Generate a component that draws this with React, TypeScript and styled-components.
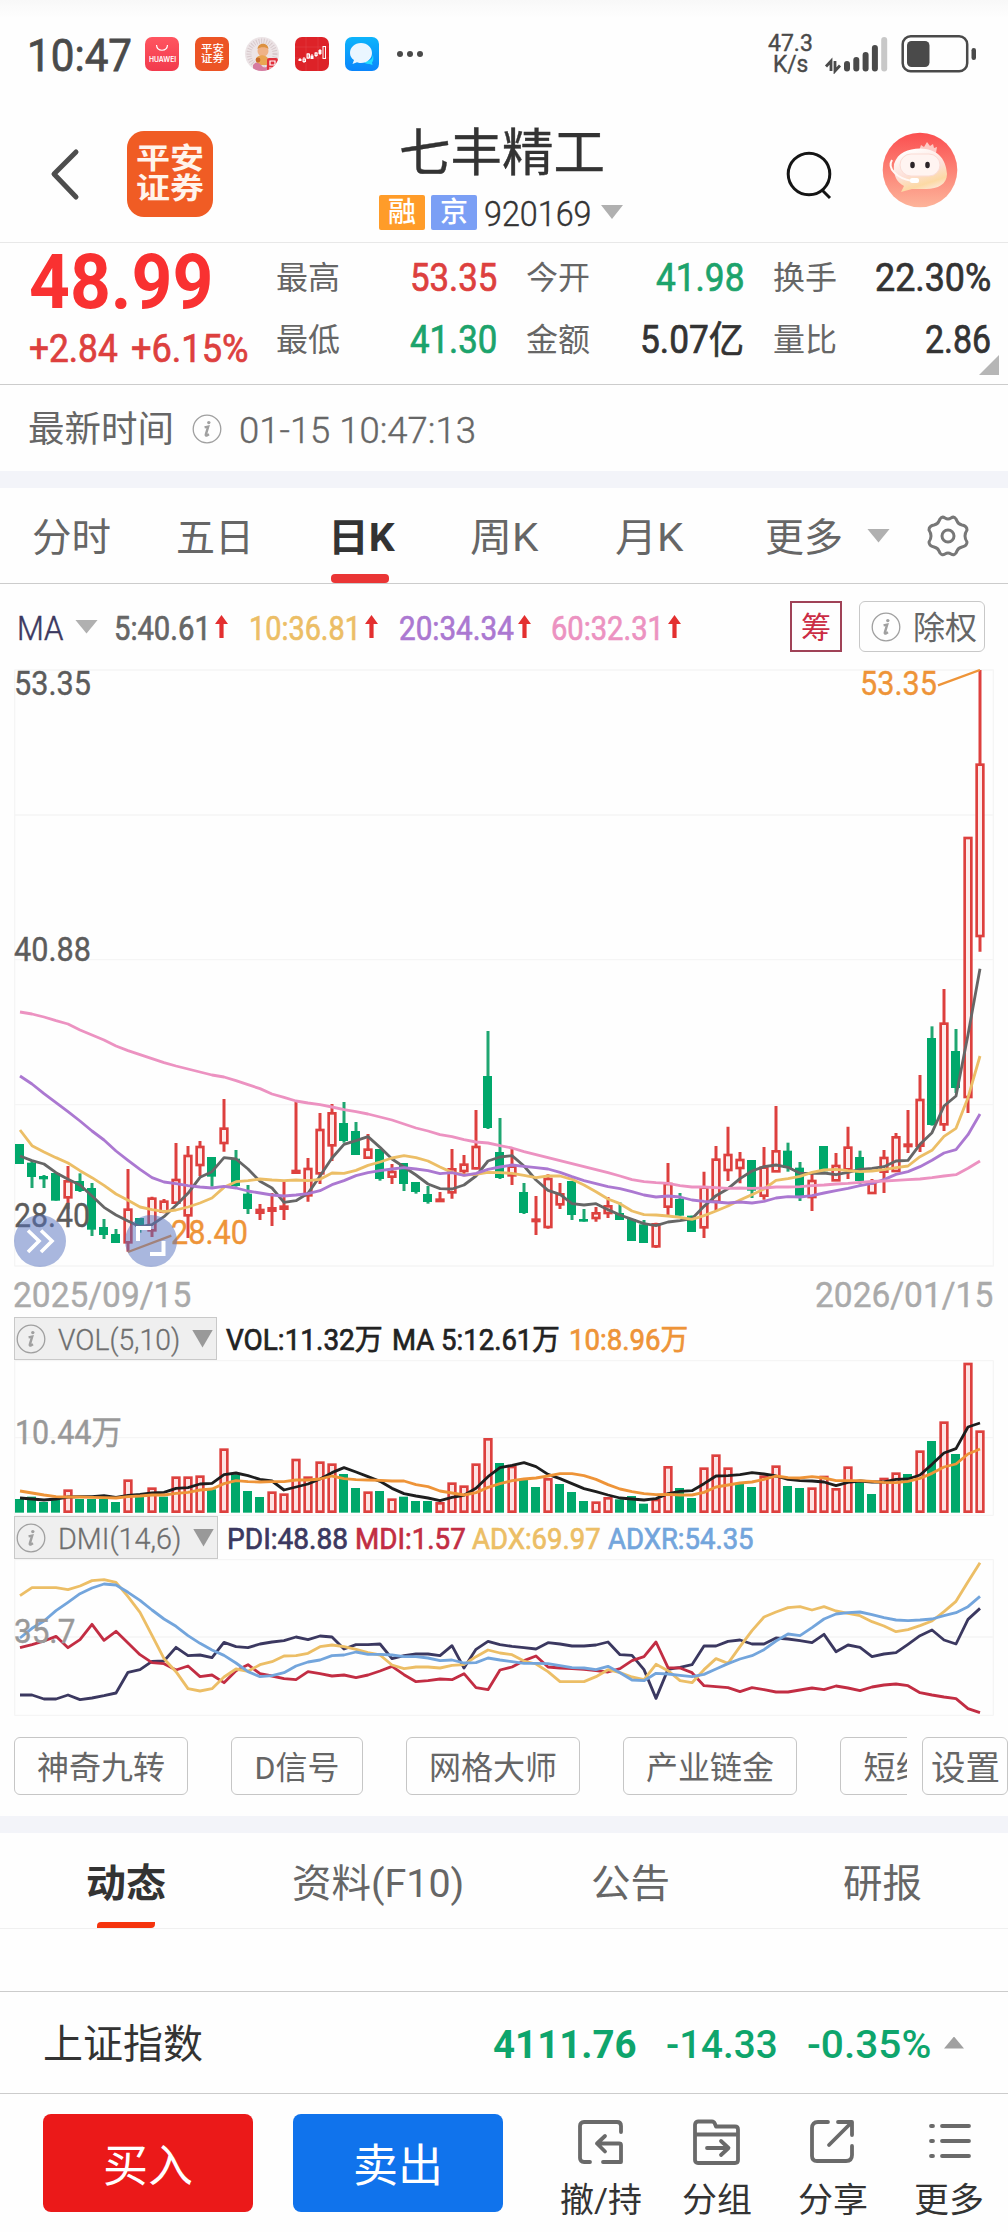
import React, { useLayoutEffect, useRef, useState } from 'react';
import styled, { createGlobalStyle, css } from 'styled-components';

const C = {
  red: '#dd403e',
  green: '#00a86b',
  text: '#333333',
  grey: '#666666',
  line: '#cccccc',
  orange: '#ee9438',
  yellow: '#ecbe66',
  purple: '#ab78d1',
  pink: '#ec92c1',
  navy: '#3b3860',
  crimson: '#c22d43',
  blue: '#73a5dc',
};

const GlobalStyle = createGlobalStyle`
  * { box-sizing: border-box; }
  body {
    margin: 0;
    background: #fefefe;
    color: ${C.text};
    font-family: Roboto, "Noto Sans CJK SC", sans-serif;
  }
  svg { display: block; }
`;

// ---------- text that is condensed or widened to a set width ----------

const FitBox = styled.span<{ $w: number }>`
  display: inline-block;
  flex: none;
  width: ${(p) => p.$w}px;
  line-height: 1;
  white-space: nowrap;
`;

const FitInner = styled.span`
  display: inline-block;
  transform-origin: left center;
`;

interface FitProps {
  w: number;
  className?: string;
  children: React.ReactNode;
}

function Fit({ w, className, children }: FitProps) {
  const ref = useRef<HTMLSpanElement>(null);
  const [scale, setScale] = useState(1);

  useLayoutEffect(() => {
    if (ref.current && ref.current.offsetWidth) {
      setScale(w / ref.current.offsetWidth);
    }
  }, [w]);

  return (
    <FitBox $w={w} className={className}>
      <FitInner ref={ref} style={{ transform: `scaleX(${scale})` }}>
        {children}
      </FitInner>
    </FitBox>
  );
}

// ---------- chart data, in thirds of a pixel ----------

// [up, high, top, bottom, low]
const candles: [number, number, number, number, number][] = [
  [0, 492, 492, 552, 552], [0, 540, 548, 591, 624], [0, 585, 588, 598, 624],
  [0, 579, 579, 662, 662], [1, 558, 604, 652, 688], [0, 580, 603, 633, 636],
  [0, 609, 624, 749, 768], [0, 717, 741, 765, 777], [0, 747, 762, 789, 789],
  [1, 567, 689, 787, 815], [0, 714, 714, 740, 758], [1, 650, 656, 751, 771],
  [1, 657, 665, 695, 700], [1, 489, 600, 668, 672], [1, 498, 528, 706, 774],
  [1, 483, 501, 555, 588], [0, 531, 531, 590, 620], [1, 357, 446, 489, 515],
  [0, 510, 536, 618, 620], [0, 615, 641, 687, 702], [1, 672, 690, 698, 720],
  [1, 639, 685, 692, 738], [1, 605, 680, 686, 720], [1, 366, 573, 578, 580],
  [1, 534, 567, 646, 665], [1, 399, 450, 580, 612], [1, 372, 400, 496, 543],
  [0, 366, 429, 483, 488], [0, 426, 453, 525, 525], [1, 462, 509, 533, 537],
  [0, 507, 507, 597, 602], [1, 552, 576, 590, 612], [0, 549, 549, 612, 633],
  [0, 606, 606, 636, 641], [0, 618, 642, 666, 671], [1, 636, 659, 663, 666],
  [1, 507, 568, 637, 656], [1, 525, 554, 573, 582], [1, 390, 501, 565, 568],
  [0, 153, 288, 444, 447], [0, 414, 516, 594, 597], [1, 505, 560, 586, 615],
  [0, 609, 636, 699, 702], [1, 648, 719, 723, 765], [1, 583, 597, 741, 746],
  [1, 609, 643, 673, 687], [0, 603, 603, 705, 720], [0, 687, 717, 725, 725],
  [1, 681, 700, 714, 725], [1, 651, 679, 699, 714], [0, 667, 699, 720, 720],
  [0, 717, 717, 783, 783], [0, 720, 733, 789, 789], [1, 728, 733, 799, 804],
  [1, 549, 612, 680, 705], [0, 639, 657, 707, 707], [0, 707, 707, 756, 756],
  [1, 575, 623, 742, 774], [1, 498, 539, 665, 692], [1, 440, 525, 570, 603],
  [1, 516, 540, 564, 610], [0, 540, 540, 632, 654], [1, 501, 563, 647, 659],
  [1, 378, 514, 574, 574], [0, 488, 512, 564, 575], [0, 546, 563, 652, 663],
  [1, 580, 603, 651, 693], [0, 498, 498, 574, 574], [1, 519, 558, 601, 603],
  [1, 440, 503, 568, 597], [0, 512, 531, 603, 613], [1, 597, 610, 639, 639],
  [1, 510, 534, 575, 639], [1, 459, 472, 573, 573], [1, 390, 494, 498, 519],
  [1, 285, 360, 497, 516], [0, 139, 174, 435, 437], [1, 27, 131, 433, 453],
  [0, 147, 213, 324, 339], [1, -426, -426, 351, 399], [1, -930, -646, -132, -85],
];

const ma5 = [
  528, 542, 552, 578, 598, 615, 648, 682, 705, 723, 740, 734, 710, 676, 640, 592, 575, 533, 537, 567,
  604, 624, 667, 662, 640, 588, 534, 493, 482, 470, 502, 537, 561, 585, 612, 626, 627, 615, 588, 543,
  531, 527, 558, 600, 631, 643, 671, 675, 671, 689, 705, 718, 731, 737, 726, 722, 716, 679, 647, 626,
  596, 573, 560, 555, 562, 580, 580, 579, 584, 577, 568, 565, 560, 543, 541, 493, 458, 378, 348, 164, -34,
];
const ma10 = [
  450, 497, 516, 533, 549, 572, 593, 616, 642, 661, 681, 689, 695, 690, 681, 669, 654, 622, 605, 602,
  597, 600, 602, 600, 602, 598, 579, 580, 571, 556, 546, 534, 527, 533, 543, 561, 577, 585, 583, 577,
  578, 580, 586, 593, 588, 588, 598, 615, 635, 657, 671, 693, 704, 705, 708, 712, 718, 707, 693, 678,
  660, 644, 627, 601, 596, 589, 577, 570, 568, 572, 575, 573, 569, 563, 558, 530, 511, 469, 445, 353, 228,
];
const ma20 = [
  288, 312, 341, 368, 395, 423, 453, 480, 513, 541, 568, 593, 606, 611, 617, 621, 624, 619, 624, 633,
  639, 645, 648, 645, 641, 632, 614, 602, 587, 578, 572, 567, 563, 567, 572, 581, 578, 586, 580, 568,
  561, 555, 559, 563, 567, 577, 590, 602, 611, 620, 626, 635, 645, 651, 648, 651, 660, 664, 666, 669,
  666, 669, 664, 654, 650, 651, 647, 639, 632, 625, 617, 610, 599, 583, 575, 560, 541, 519, 509, 464, 402,
];
const ma60 = [
  96, 102, 111, 122, 132, 150, 165, 180, 198, 212, 224, 236, 248, 258, 267, 276, 285, 291, 302, 314,
  326, 342, 352, 363, 369, 374, 381, 389, 395, 402, 411, 420, 432, 444, 453, 464, 470, 479, 486, 489,
  497, 504, 515, 524, 533, 542, 551, 560, 569, 578, 588, 599, 605, 608, 610, 617, 621, 621, 623, 625,
  624, 625, 624, 621, 621, 620, 617, 615, 612, 610, 607, 604, 603, 601, 599, 597, 593, 588, 584, 565, 543,
];

// tops of the volume bars, negative on a falling day
const volumes = [
  -597, -590, -606, -597, 570, -597, -597, -597, -606, 540, -590, 564, -590, 531, 531, 528, -568, 447,
  -523, -573, -591, 576, 582, 478, 531, 486, 492, -522, -564, 576, -573, 597, -590, -603, -603, 608,
  549, 558, 492, 416, -489, 499, -538, -561, 536, -552, -576, -603, 606, 593, -598, -588, -611, 598,
  500, -564, -594, 504, 465, 504, -550, -561, 528, 498, -558, -564, 564, 529, 566, 501, -547, -582,
  535, 519, -522, 453, -423, 366, -462, 190, 393,
];
const vol5 = [
  594, 597, 600, 597, 591, 590, 590, 587, 592, 586, 583, 579, 577, 565, 563, 552, 550, 524, 519, 527,
  538, 543, 570, 561, 552, 537, 518, 503, 516, 530, 544, 565, 581, 588, 594, 602, 592, 586, 565, 530,
  503, 496, 488, 500, 523, 536, 551, 566, 575, 585, 594, 597, 600, 596, 581, 574, 572, 551, 528, 527,
  524, 518, 522, 528, 538, 542, 543, 546, 557, 547, 543, 546, 546, 538, 537, 525, 493, 459, 446, 381, 369,
];
const vol10 = [
  573, 579, 585, 590, 591, 591, 592, 593, 594, 590, 588, 585, 585, 580, 577, 570, 567, 551, 542, 545,
  546, 545, 545, 540, 540, 537, 528, 536, 539, 540, 541, 543, 543, 554, 560, 573, 579, 585, 578, 562,
  551, 542, 537, 534, 528, 521, 521, 527, 538, 554, 567, 575, 581, 584, 583, 585, 585, 577, 561, 555,
  549, 546, 538, 528, 533, 534, 530, 534, 542, 542, 542, 544, 547, 548, 544, 535, 520, 501, 492, 462, 447,
];

const pdi = [
  1185, 1185, 1197, 1197, 1185, 1199, 1194, 1187, 1179, 1117, 1109, 1084, 1083, 1042, 1067, 1065, 1073,
  1027, 1040, 1043, 1032, 1026, 1022, 1011, 1019, 1008, 1011, 1047, 1034, 1034, 1032, 1076, 1067, 1062,
  1062, 1067, 1037, 1104, 1048, 1024, 1034, 1039, 1043, 1047, 1028, 1032, 1038, 1038, 1035, 1026, 1064,
  1066, 1109, 1195, 1108, 1102, 1094, 1038, 1038, 1024, 1020, 1032, 1032, 1014, 1017, 1022, 1028, 1003,
  1055, 1035, 1042, 1070, 1062, 1058, 1033, 1007, 990, 1020, 1032, 958, 925,
];
const mdi = [
  1043, 1034, 1023, 1009, 1043, 1019, 973, 1021, 994, 1029, 1064, 1088, 1091, 1110, 1098, 1130, 1125,
  1148, 1112, 1094, 1121, 1128, 1136, 1139, 1115, 1121, 1128, 1125, 1133, 1125, 1113, 1099, 1124, 1145,
  1142, 1137, 1139, 1121, 1163, 1169, 1110, 1101, 1082, 1068, 1101, 1104, 1106, 1108, 1112, 1116, 1106,
  1082, 1070, 1026, 1103, 1104, 1118, 1157, 1160, 1163, 1175, 1163, 1169, 1176, 1176, 1170, 1164, 1169,
  1158, 1164, 1172, 1161, 1155, 1152, 1157, 1178, 1185, 1191, 1196, 1226, 1238,
];
const adx = [
  887, 863, 863, 863, 869, 858, 842, 839, 847, 890, 937, 1006, 1076, 1115, 1166, 1173, 1166, 1131, 1107,
  1114, 1094, 1085, 1068, 1067, 1060, 1040, 1035, 1040, 1048, 1058, 1065, 1095, 1106, 1101, 1101, 1104,
  1096, 1094, 1070, 1050, 1059, 1064, 1083, 1092, 1115, 1145, 1145, 1145, 1130, 1109, 1118, 1131, 1139,
  1093, 1112, 1142, 1148, 1109, 1076, 1090, 1040, 992, 951, 936, 923, 920, 930, 920, 933, 940, 947, 965,
  978, 995, 989, 977, 963, 935, 904, 845, 788,
];
const adxr = [
  1014, 985, 963, 932, 907, 881, 864, 852, 855, 877, 901, 930, 957, 979, 1007, 1030, 1050, 1066, 1089,
  1115, 1130, 1127, 1118, 1098, 1086, 1080, 1067, 1065, 1056, 1063, 1063, 1065, 1070, 1070, 1074, 1082,
  1080, 1089, 1088, 1074, 1080, 1085, 1090, 1090, 1091, 1097, 1103, 1104, 1109, 1099, 1118, 1140, 1142,
  1120, 1122, 1126, 1130, 1123, 1107, 1091, 1077, 1067, 1049, 1023, 1002, 1007, 983, 957, 942, 938, 936,
  944, 953, 960, 962, 960, 957, 947, 938, 920, 889,
];

const xAt = (i: number) => 60 + 36 * i;

const Series = ({ data, color }: { data: number[]; color: string }) => (
  <polyline
    points={data.map((y, i) => `${xAt(i)},${y}`).join(' ')}
    fill="none"
    stroke={color}
    strokeWidth={8.5}
    strokeLinejoin="round"
  />
);

const Grid = ({ rows }: { rows: number[] }) => (
  <g stroke="#f5f5f5" strokeWidth={4}>
    {rows.map((y) => (
      <line key={y} x1={43} x2={2981} y1={y} y2={y} />
    ))}
    <line x1={44} x2={44} y1={rows[0]} y2={rows[rows.length - 1]} />
    <line x1={2980} x2={2980} y1={rows[0]} y2={rows[rows.length - 1]} />
  </g>
);

// ---------- shared bits ----------

const Page = styled.div`
  width: 1008px;
  height: 2232px;
  display: flex;
  flex-direction: column;
  overflow: hidden;
  background: #fefefe;
`;

const Triangle = styled.i<{ $w?: number; $h?: number; $up?: boolean; $ml?: number; $c?: string }>`
  flex: none;
  width: ${(p) => p.$w ?? 23}px;
  height: ${(p) => p.$h ?? 14}px;
  margin-left: ${(p) => p.$ml ?? 0}px;
  background: ${(p) => p.$c ?? '#b0b0b0'};
  clip-path: ${(p) => (p.$up ? 'polygon(50% 0, 100% 100%, 0 100%)' : 'polygon(0 0, 100% 0, 50% 100%)')};
`;

const InfoSvg = styled.svg`
  flex: none;
`;

const InfoIcon = ({ color = '#a0a0a0' }: { color?: string }) => (
  <InfoSvg width="30" height="30" viewBox="0 0 30 30" fill="none" stroke={color}>
    <circle cx="15" cy="15" r="13.8" strokeWidth="1.3" />
    <circle cx="16.8" cy="8.6" r="1.7" fill={color} stroke="none" />
    <path d="M12.6 13.4 L16.2 12.6 L13.8 20.6 Q13.6 22 15 21.4 L17 20.2" strokeWidth="2.4" />
  </InfoSvg>
);

const Band = styled.div`
  flex: none;
  height: 17px;
  background: #f3f4f9;
`;

// ---------- status bar ----------

const StatusBar = styled.div`
  flex: none;
  height: 108px;
  display: flex;
  align-items: center;
  padding: 0 32px 0 27px;
  background: linear-gradient(#f8f8f8, #fefefe 18px);
`;

const Clock = styled(Fit)`
  font-size: 45px;
  font-weight: 400;
  color: #4a4a4a;
  -webkit-text-stroke: 0.8px #4a4a4a;
  padding-top: 2px;
`;

const AppIcons = styled.div`
  display: flex;
  gap: 16px;
  margin-left: 13px;
`;

const MiniIcon = styled.div<{ $bg: string; $round?: boolean }>`
  width: 34px;
  height: 34px;
  border-radius: ${(p) => (p.$round ? '50%' : '7px')};
  background: ${(p) => p.$bg};
  display: flex;
  flex-direction: column;
  align-items: center;
  justify-content: center;
  color: white;
  overflow: hidden;
`;

const HuaweiText = styled(Fit)`
  font-size: 7px;
  font-weight: 600;
  font-family: Inter, sans-serif;
  margin-top: 2px;
`;

const MiniLogoText = styled(Fit)`
  font-size: 10px;
  font-weight: 500;
  line-height: 10px;
`;

const More = styled.div`
  display: flex;
  gap: 4px;
  margin: 0 auto 0 18px;
  i {
    width: 6px;
    height: 6px;
    border-radius: 50%;
    background: #4a4a4a;
  }
`;

const Speed = styled.div`
  display: flex;
  flex-direction: column;
  align-items: center;
  font-size: 24px;
  font-weight: 400;
  color: #4a4a4a;
  -webkit-text-stroke: 0.4px #4a4a4a;
  span { line-height: 21px; }
`;

const StatusIcons = styled.svg`
  margin-left: 11px;
`;

// ---------- title bar ----------

const TitleBar = styled.header`
  flex: none;
  height: 135px;
  display: flex;
  align-items: flex-start;
  border-bottom: 1px solid #e8e8e8;
`;

const Brand = styled.div`
  width: 86px;
  height: 86px;
  margin: 23px 0 0 47px;
  border-radius: 17px;
  background: #f05c24;
  color: #fff4ec;
  display: flex;
  flex-direction: column;
  align-items: center;
  justify-content: center;
`;

const BrandText = styled(Fit)`
  font-size: 29px;
  font-weight: 700;
  line-height: 30px;
`;

const BackIcon = styled.svg`
  margin: 38px 0 0 48px;
`;

const TitleCol = styled.div`
  width: 244px;
  margin: 20px 0 0 166px;
  display: flex;
  flex-direction: column;
  align-items: center;
`;

const Title = styled(Fit)`
  font-size: 51px;
  line-height: 52px;
  margin-left: 1px;
  -webkit-text-stroke: 0.4px ${C.text};
`;

const SubRow = styled.div`
  display: flex;
  align-items: center;
  margin-top: 12px;
`;

const Tag = styled.span<{ $bg: string }>`
  width: 46px;
  height: 35px;
  margin-right: 6px;
  border-radius: 2px;
  background: ${(p) => p.$bg};
  color: white;
  font-size: 28px;
  font-weight: 500;
  line-height: 35px;
  text-align: center;
`;

const Code = styled(Fit)`
  font-size: 35px;
  font-weight: 300;
  margin-left: 1px;
  padding-top: 5px;
  -webkit-text-stroke: 0.4px ${C.text};
`;

const SearchSvg = styled.svg`
  margin: 42px 0 0 163px;
`;

const AvatarSvg = styled.svg`
  margin: 24px 0 0 48px;
`;

// ---------- quote ----------

const Quote = styled.section`
  flex: none;
  height: 142px;
  display: flex;
  border-bottom: 1px solid ${C.line};
  position: relative;
`;

const PriceCol = styled.div`
  width: 276px;
  padding: 0 0 0 29px;
  display: flex;
  flex-direction: column;
`;

const Price = styled(Fit)`
  font-size: 76px;
  font-weight: 700;
  color: #f93131;
  margin-top: 1px;
`;

const Changes = styled.div`
  display: flex;
  gap: 13px;
  margin-top: 10px;
`;

const Num = styled(Fit)<{ $c?: string }>`
  font-size: 38px;
  font-weight: 400;
  color: ${(p) => p.$c ?? C.text};
  -webkit-text-stroke: 0.7px ${(p) => p.$c ?? C.text};
`;

const Stats = styled.div`
  display: grid;
  grid-template-columns: 221px 218px 218px;
  column-gap: 29px;
  grid-template-rows: 62px 62px;
  padding-top: 4px;
`;

const Stat = styled.div`
  display: flex;
  align-items: center;
  justify-content: space-between;
  & > ${FitBox}:first-child { font-size: 32px; color: ${C.grey}; }
`;

const Corner = styled.i`
  position: absolute;
  right: 9px;
  bottom: 9px;
  width: 20px;
  height: 20px;
  background: #b6b6b6;
  clip-path: polygon(100% 0, 100% 100%, 0 100%);
`;

const stats = [
  { label: '最高', value: '53.35', w: 87, color: C.red },
  { label: '今开', value: '41.98', w: 88, color: '#1ca36c' },
  { label: '换手', value: '22.30%', w: 116 },
  { label: '最低', value: '41.30', w: 87, color: '#1ca36c' },
  { label: '金额', value: '5.07亿', w: 104 },
  { label: '量比', value: '2.86', w: 66 },
];

const TimeRow = styled.div`
  flex: none;
  height: 86px;
  display: flex;
  align-items: center;
  padding: 2px 0 0 28px;
  font-size: 36px;
  color: ${C.grey};
  ${InfoSvg} { margin: 0 17px 0 18px; }
`;

const TimeLabel = styled(Fit)`
  padding-top: 2px;
`;

const TimeValue = styled(Fit)`
  font-weight: 300;
  -webkit-text-stroke: 0.4px ${C.grey};
  padding-top: 3px;
`;

// ---------- period tabs ----------

const Tabs = styled.nav`
  flex: none;
  height: 96px;
  display: flex;
  align-items: center;
  padding-left: 32px;
  border-bottom: 1px solid ${C.line};
  color: ${C.grey};
`;

const Tab = styled.div<{ $ml?: number; $active?: boolean }>`
  height: 95px;
  display: flex;
  align-items: center;
  position: relative;
  margin-left: ${(p) => p.$ml ?? 0}px;
  padding-top: 5px;
  font-size: 39px;
  ${(p) =>
    p.$active &&
    css`
      color: ${C.text};
      font-weight: 700;
      &:after {
        content: '';
        position: absolute;
        left: 3px;
        bottom: 0;
        width: 58px;
        height: 9px;
        border-radius: 4px;
        background: #ea3535;
      }
    `}
`;

const GearSvg = styled.svg`
  margin-left: 36px;
`;

// ---------- MA row ----------

const MaRow = styled.div`
  flex: none;
  height: 85px;
  display: flex;
  align-items: center;
  padding: 0 23px 0 17px;
`;

const MaLabel = styled(Fit)`
  font-size: 33px;
  font-weight: 300;
  color: ${C.navy};
  -webkit-text-stroke: 0.5px ${C.navy};
  padding-top: 3px;
`;

const MaValue = styled(Fit)<{ $c: string; $ml: number }>`
  font-size: 34px;
  font-weight: 400;
  color: ${(p) => p.$c};
  -webkit-text-stroke: 0.7px ${(p) => p.$c};
  margin-left: ${(p) => p.$ml}px;
  padding-top: 2px;
`;

const UpSvg = styled.svg`
  flex: none;
  margin-left: 4px;
`;

const UpArrow = () => (
  <UpSvg width="13" height="23" viewBox="0 0 13 23">
    <path d="M6.5 0 L13 9 H8.600 V23 H4.400 V9 H0 Z" fill="#e32f2f" />
  </UpSvg>
);

const ChipBox = styled.div`
  width: 52px;
  height: 51px;
  margin-left: auto;
  padding-top: 2px;
  border: 2px solid #a04257;
  color: #cb2c44;
  font-size: 30px;
  line-height: 46px;
  text-align: center;
`;

const RightsBox = styled.div`
  width: 126px;
  height: 51px;
  margin-left: 17px;
  border: 1px solid #c8c8c8;
  border-radius: 6px;
  display: flex;
  align-items: center;
  gap: 12px;
  padding-left: 11px;
  font-size: 32px;
  color: ${C.grey};
`;

const RightsText = styled(Fit)`
  padding-top: 2px;
`;

// ---------- charts ----------

const Plot = styled.div<{ $h: number }>`
  flex: none;
  position: relative;
  height: ${(p) => p.$h}px;
`;

const PlotLabel = styled(Fit)<{ $x: number; $y: number; $c?: string }>`
  position: absolute;
  left: ${(p) => p.$x}px;
  top: ${(p) => p.$y}px;
  font-size: 33px;
  color: ${(p) => p.$c ?? '#5c5c5c'};
  -webkit-text-stroke: 0.4px ${(p) => p.$c ?? '#5c5c5c'};
`;

const RoundButton = styled.svg<{ $x: number }>`
  position: absolute;
  left: ${(p) => p.$x}px;
  top: 546px;
`;

const Dates = styled.div`
  flex: none;
  height: 50px;
  display: flex;
  justify-content: space-between;
  padding: 11px 15px 0 13px;
  font-size: 35px;
  color: #aaaaaa;
  -webkit-text-stroke: 0.4px #aaaaaa;
`;

const IndicatorRow = styled.div`
  flex: none;
  height: 43px;
  display: flex;
  align-items: center;
`;

const Picker = styled.div<{ $w: number }>`
  width: ${(p) => p.$w}px;
  height: 43px;
  margin-left: 14px;
  display: flex;
  align-items: center;
  padding-left: 1px;
  background: #efefef;
  border: 1px solid #c9c9c9;
`;

const PickerText = styled(Fit)`
  margin-left: 12px;
  padding-top: 3px;
  font-size: 29px;
  font-weight: 300;
  color: #6e6e6e;
  -webkit-text-stroke: 0.3px #6e6e6e;
`;

const Readout = styled(Fit)<{ $c?: string; $ml?: number }>`
  margin-left: ${(p) => p.$ml ?? 9}px;
  padding-top: 3px;
  font-size: 29px;
  font-weight: 400;
  color: ${(p) => p.$c ?? '#222222'};
  -webkit-text-stroke: 0.7px ${(p) => p.$c ?? '#222222'};
`;

const Tools = styled.div`
  flex: none;
  height: 100px;
  padding-top: 21px;
  display: flex;
  justify-content: space-between;
  padding-left: 14px;
`;

const ToolStrip = styled.div`
  width: 893px;
  display: flex;
  gap: 43px;
  overflow: hidden;
`;

const Tool = styled.div<{ $w: number; $size?: number }>`
  flex: none;
  width: ${(p) => p.$w}px;
  height: 58px;
  display: flex;
  align-items: center;
  justify-content: center;
  padding-top: 3px;
  border: 1px solid #c6c6c6;
  border-radius: 6px;
  font-size: ${(p) => p.$size ?? 32}px;
  color: ${C.grey};
`;

const tools = [
  { label: '神奇九转', w: 174, fit: 128 },
  { label: 'D信号', w: 132, fit: 85 },
  { label: '网格大师', w: 174, fit: 128 },
  { label: '产业链金', w: 174, fit: 128 },
  { label: '短线', w: 111, fit: 64 },
];

// ---------- news tabs, index, footer ----------

const NewsTabs = styled.nav`
  flex: none;
  height: 96px;
  display: grid;
  grid-template-columns: repeat(4, 1fr);
  border-bottom: 1px solid #f0f0f0;
`;

const NewsTab = styled.div<{ $active?: boolean }>`
  position: relative;
  display: flex;
  align-items: center;
  justify-content: center;
  padding-top: 7px;
  font-size: 39px;
  color: ${C.grey};
  ${(p) =>
    p.$active &&
    css`
      color: ${C.text};
      font-weight: 700;
      &:after {
        content: '';
        position: absolute;
        left: 97px;
        bottom: 0;
        width: 58px;
        height: 6px;
        border-radius: 4px 0 4px 0;
        background: #f5340e;
      }
    `}
`;

const IndexRow = styled.div`
  flex: none;
  height: 103px;
  margin-top: 62px;
  display: flex;
  align-items: center;
  padding: 0 43px;
  border-top: 1px solid ${C.line};
  border-bottom: 1px solid ${C.line};
`;

const IndexName = styled(Fit)`
  font-size: 40px;
  padding-top: 4px;
`;

const IndexNum = styled(Fit)<{ $ml: string; $weight: number }>`
  margin-left: ${(p) => p.$ml};
  font-size: 39px;
  font-weight: ${(p) => p.$weight};
  color: #0ea56c;
  padding-top: 6px;
`;

const Footer = styled.footer`
  flex: none;
  height: 138px;
  display: flex;
  padding: 20px 0 0 43px;
`;

const Trade = styled.button<{ $bg: string }>`
  width: 210px;
  height: 98px;
  margin-right: 40px;
  padding: 6px 0 0;
  border: 0;
  border-radius: 8px;
  background: ${(p) => p.$bg};
  color: white;
  font-family: inherit;
  font-size: 45px;
`;

const Action = styled.div<{ $w: number; $ml: number }>`
  width: ${(p) => p.$w}px;
  margin-left: ${(p) => p.$ml}px;
  display: flex;
  flex-direction: column;
  align-items: center;
  gap: 18px;
  padding-top: 5px;
  font-size: 34px;
  svg {
    flex: none;
    stroke: #6a6a6a;
    stroke-width: 3.8;
    fill: none;
    stroke-linecap: round;
    stroke-linejoin: round;
  }
`;

function App() {
  return (
    <Page>
      <GlobalStyle />

      <StatusBar>
        <Clock w={105}>10:47</Clock>
        <AppIcons>
          <MiniIcon $bg="linear-gradient(#ff5560, #f23a4d)">
            <svg width="14" height="9" viewBox="0 0 14 9" fill="none" stroke="#fff" strokeWidth="1.2">
              <path d="M1.5 0 C2 7 12 7 12.5 0" />
            </svg>
            <HuaweiText w={27}>HUAWEI</HuaweiText>
          </MiniIcon>
          <MiniIcon $bg="#ec5425">
            <MiniLogoText w={23}>平安</MiniLogoText>
            <MiniLogoText w={23}>证券</MiniLogoText>
          </MiniIcon>
          <MiniIcon $bg="#ece4e6" $round>
            <svg width="34" height="34" viewBox="0 0 34 34">
              <circle cx="17" cy="17" r="13" fill="none" stroke="#d8c9cc" strokeWidth="5" strokeDasharray="1 1.5" />
              <circle cx="18" cy="14" r="5.5" fill="#efb287" />
              <path d="M12.5 12 C13 5 23 5 23.5 12 C21 9.5 15 9.5 12.5 12" fill="#dc9140" />
              <path d="M11 22 C12 17 22 17 23 22 L22 28 H12 Z" fill="#e9a552" />
              <path d="M8 28 Q12 23 16 28 T23 28 V34 H8 Z" fill="#d67ba0" />
              <circle cx="13" cy="23" r="2.4" fill="#c96b2c" />
              <rect x="22" y="21" width="11" height="13" rx="2" fill="#e1303c" />
              <path d="M25 24 H30 V28 H25 Z M24 31 H31" fill="none" stroke="#fff" strokeWidth="1.2" />
            </svg>
          </MiniIcon>
          <MiniIcon $bg="#dd2228">
            <svg width="34" height="34" viewBox="0 0 34 34" stroke="#fff" fill="#fff">
              <path d="M0 10 H34 M0 21 H34 M11 0 V34 M23 0 V34" stroke="#e3474b" strokeWidth="0.5" />
              <path d="M5 21 V24 M9 20 V26 M13 16 V22 M17 17 V22 M21 15 V20 M25 12 V18" strokeWidth="1" />
              <rect x="3.5" y="22" width="3" height="2" stroke="none" />
              <rect x="8" y="22" width="2.5" height="2.5" fill="none" strokeWidth="1" />
              <rect x="12" y="17" width="2.5" height="4" fill="none" strokeWidth="1" />
              <rect x="15.5" y="18.5" width="3" height="3.5" stroke="none" />
              <rect x="20" y="16" width="2.2" height="2.5" fill="none" strokeWidth="1" />
              <rect x="23.5" y="13" width="3" height="4" stroke="none" />
              <rect x="28" y="9.5" width="2.5" height="12" fill="none" strokeWidth="1" />
            </svg>
          </MiniIcon>
          <MiniIcon $bg="linear-gradient(#0db4fb, #0a85fb)">
            <svg width="34" height="34" viewBox="0 0 34 34">
              <path d="M21 24 C27 24 28 20 27.5 17 C29 21 28.5 24 27 25.5 L27.5 28 L24.5 27 C22 27.5 19 26 19 24 Z" fill="#21dcff" />
              <path d="M16 6 C22.5 6 27 10.5 27 16 C27 21.5 22.5 26 16 26 C14 26 13 25.5 12 25.2 L7.5 27 L9 23 C6.5 21.5 5 19 5 16 C5 10.5 9.5 6 16 6 Z" fill="#eaf6ff" />
            </svg>
          </MiniIcon>
        </AppIcons>
        <More><i /><i /><i /></More>
        <Speed>
          <Fit w={45}>47.3</Fit>
          <Fit w={35}>K/s</Fit>
        </Speed>
        <StatusIcons width="152" height="40" viewBox="825 33 152 40">
          <path d="M832 70 V60 L827 65.5 M836 60 V70 L841 64.5" fill="none" stroke="#4a4a4a" strokeWidth="2.8" />
          <g fill="#4a4a4a">
            <rect x="845" y="60" width="6" height="10.5" rx="3" />
            <rect x="854.3" y="56" width="6" height="14.5" rx="3" />
            <rect x="863.6" y="51" width="6" height="19.5" rx="3" />
            <rect x="872.9" y="44" width="6" height="26.5" rx="3" />
          </g>
          <rect x="882.2" y="36" width="6" height="34.5" rx="3" fill="#c8c8c8" />
          <rect x="903.7" y="35.3" width="64.5" height="35" rx="8" fill="none" stroke="#4a4a4a" strokeWidth="2.5" />
          <rect x="908" y="40" width="22.5" height="26" rx="4.5" fill="#4a4a4a" />
          <rect x="972.5" y="47" width="4.5" height="12" rx="2.2" fill="#4a4a4a" />
        </StatusIcons>
      </StatusBar>

      <TitleBar>
        <BackIcon width="32" height="56" viewBox="48 146 32 56" fill="none" stroke="#4d4d4d" strokeWidth="5" strokeLinecap="round" strokeLinejoin="round">
          <path d="M76 152 L54 174 L76 197" />
        </BackIcon>
        <Brand>
          <BrandText w={68}>平安</BrandText>
          <BrandText w={68}>证券</BrandText>
        </Brand>
        <TitleCol>
          <Title w={206}>七丰精工</Title>
          <SubRow>
            <Tag $bg="#ff9c29">融</Tag>
            <Tag $bg="#7b9ff5">京</Tag>
            <Code w={107}>920169</Code>
            <Triangle $ml={10} $w={22} />
          </SubRow>
        </TitleCol>
        <SearchSvg width="48" height="50" viewBox="788 150 48 50" fill="none" stroke="#151515" strokeWidth="3">
          <circle cx="811" cy="174" r="20.8" />
          <path d="M824 190 L832 198" />
        </SearchSvg>
        <AvatarSvg width="76" height="76" viewBox="0 0 76 76">
          <defs>
            <linearGradient id="sky" x1="0" y1="0" x2="0" y2="1">
              <stop offset="0" stopColor="#fb4f50" />
              <stop offset="1" stopColor="#fdb49a" />
            </linearGradient>
            <linearGradient id="shell" x1="0.3" y1="0" x2="0.7" y2="1">
              <stop offset="0" stopColor="#ffffff" />
              <stop offset="0.5" stopColor="#fde0d8" />
              <stop offset="0.8" stopColor="#fcd9a4" />
              <stop offset="1" stopColor="#fdeae2" />
            </linearGradient>
          </defs>
          <circle cx="38" cy="38" r="37.3" fill="url(#sky)" />
          <path d="M37 19 L39 13 L42 15 L45 10 L48 14 L51 12 L52 16 L55 15 L54 21 Z" fill="#fdc9c4" />
          <path d="M12 32 C16 20 26 17 38 16.5 C54 17 64 25 65 42 C65 52 56 57 44 57 L30 57 L19 60 L22 54 C14 50 11 42 12 32 Z" fill="url(#shell)" />
          <rect x="18" y="22" width="40" height="22" rx="11" fill="#fff4f1" stroke="#fbdcd5" />
          <path d="M10 28 C5 36 14 46 30 49" fill="none" stroke="#fff8f5" strokeWidth="2" />
          <rect x="28" y="46" width="9" height="5" rx="2" fill="#fff" />
          <ellipse cx="30.5" cy="33" rx="2.3" ry="3.3" fill="#2c2428" />
          <ellipse cx="45.5" cy="33" rx="2.3" ry="3.3" fill="#2c2428" />
        </AvatarSvg>
      </TitleBar>

      <Quote>
        <PriceCol>
          <Price w={184}>48.99</Price>
          <Changes>
            <Num w={89} $c={C.red}>+2.84</Num>
            <Num w={117} $c={C.red}>+6.15%</Num>
          </Changes>
        </PriceCol>
        <Stats>
          {stats.map((s) => (
            <Stat key={s.label}>
              <Fit w={64}>{s.label}</Fit>
              <Num w={s.w} $c={s.color}>{s.value}</Num>
            </Stat>
          ))}
        </Stats>
        <Corner />
      </Quote>

      <TimeRow>
        <TimeLabel w={146}>最新时间</TimeLabel>
        <InfoIcon />
        <TimeValue w={237}>01-15 10:47:13</TimeValue>
      </TimeRow>
      <Band />

      <Tabs>
        <Tab><Fit w={79}>分时</Fit></Tab>
        <Tab $ml={65}><Fit w={78}>五日</Fit></Tab>
        <Tab $ml={74} $active><Fit w={67}>日K</Fit></Tab>
        <Tab $ml={75}><Fit w={68}>周K</Fit></Tab>
        <Tab $ml={77}><Fit w={68}>月K</Fit></Tab>
        <Tab $ml={82}><Fit w={78}>更多</Fit></Tab>
        <Triangle $ml={24} />
        <GearSvg width="44" height="44" viewBox="0 0 44 44" fill="none" stroke="#777" strokeWidth="3" strokeLinejoin="round">
          <path d="M14 5 Q16 2 19 4 Q22 6 25 4 Q28 2 30 5 L31 7 Q32 10 36 11 Q41 12 41 16 Q39 19 39 22 Q39 25 41 28 Q41 32 36 33 Q32 34 31 37 L30 39 Q28 42 25 40 Q22 38 19 40 Q16 42 14 39 L13 37 Q12 34 8 33 Q3 32 3 28 Q5 25 5 22 Q5 19 3 16 Q3 12 8 11 Q12 10 13 7 Z" />
          <circle cx="22" cy="22" r="6" />
        </GearSvg>
      </Tabs>

      <MaRow>
        <MaLabel w={46}>MA</MaLabel>
        <Triangle $ml={12} />
        <MaValue w={97} $ml={16} $c={C.grey}>5:40.61</MaValue>
        <UpArrow />
        <MaValue w={112} $ml={21} $c={C.yellow}>10:36.81</MaValue>
        <UpArrow />
        <MaValue w={115} $ml={21} $c={C.purple}>20:34.34</MaValue>
        <UpArrow />
        <MaValue w={113} $ml={20} $c={C.pink}>60:32.31</MaValue>
        <UpArrow />
        <ChipBox>筹</ChipBox>
        <RightsBox>
          <InfoIcon />
          <RightsText w={64}>除权</RightsText>
        </RightsBox>
      </MaRow>

      <Plot $h={598}>
        <svg width="1008" height="598" viewBox="0 -933 3024 1794">
          <Grid rows={[-930, -495, -61, 374, 858]} />
          {candles.map(([up, high, top, bottom, low], i) => {
            const x = xAt(i);
            return up ? (
              <g key={i} stroke={C.red}>
                <path d={`M${x} ${high} V${top} M${x} ${bottom} V${low}`} strokeWidth={9} />
                <rect x={x - 10} y={top} width={20} height={bottom - top} fill="#fdecec" strokeWidth={8} />
              </g>
            ) : (
              <g key={i} fill={C.green}>
                <path d={`M${x} ${high} V${low}`} stroke="#1fa671" strokeWidth={9} />
                <rect x={x - 15} y={top} width={27} height={bottom - top} />
              </g>
            );
          })}
          <Series data={ma5} color="#666666" />
          <Series data={ma10} color={C.yellow} />
          <Series data={ma20} color={C.purple} />
          <Series data={ma60} color={C.pink} />
          <path d="M2814 -884 L2940 -930 M384 816 L514 767" stroke={C.orange} strokeWidth={7} />
        </svg>
        <PlotLabel w={77} $x={14} $y={-2}>53.35</PlotLabel>
        <PlotLabel w={77} $x={14} $y={264}>40.88</PlotLabel>
        <PlotLabel w={76} $x={14} $y={530}>28.40</PlotLabel>
        <PlotLabel w={77} $x={860} $y={-2} $c={C.orange}>53.35</PlotLabel>
        <PlotLabel w={77} $x={171} $y={547} $c={C.orange}>28.40</PlotLabel>
        <RoundButton $x={14} width="52" height="52" viewBox="0 0 52 52">
          <circle cx="26" cy="26" r="26" fill="rgba(83, 112, 190, 0.5)" />
          <path d="M14 15.5 L25 26 L14 37 M27 15.5 L38 26 L27 37" fill="none" stroke="#fff" strokeWidth="3.6" />
        </RoundButton>
        <RoundButton $x={124.5} width="52" height="52" viewBox="0 0 52 52">
          <circle cx="26" cy="26" r="26" fill="rgba(83, 112, 190, 0.5)" />
          <path d="M13 26 V13 H26 M38.5 26 V39 H25" fill="none" stroke="#fff" strokeWidth="4" />
        </RoundButton>
      </Plot>

      <Dates>
        <Fit w={178}>2025/09/15</Fit>
        <Fit w={178}>2026/01/15</Fit>
      </Dates>

      <IndicatorRow>
        <Picker $w={203}>
          <InfoIcon />
          <PickerText w={122}>VOL(5,10)</PickerText>
          <Triangle $ml={12} $w={21} $h={18} $c="#999" />
        </Picker>
        <Readout w={157}>VOL:11.32万</Readout>
        <Readout w={168}>MA 5:12.61万</Readout>
        <Readout w={119} $c={C.orange}>10:8.96万</Readout>
      </IndicatorRow>
      <Plot $h={156}>
        <svg width="1008" height="156" viewBox="0 180 3024 468">
          <Grid rows={[182, 413, 646]} />
          {volumes.map((v, i) =>
            v > 0 ? (
              <rect key={i} x={xAt(i) - 10} y={v + 2} width={20} height={633 - v} fill="#fde3e3" stroke={C.red} strokeWidth={8} />
            ) : (
              <rect key={i} x={xAt(i) - 15} y={-v} width={27} height={638 + v} fill={C.green} />
            ),
          )}
          <Series data={vol5} color="#1e1e1e" />
          <Series data={vol10} color={C.orange} />
        </svg>
        <PlotLabel w={107} $x={15} $y={56} $c="#999">10.44万</PlotLabel>
      </Plot>

      <IndicatorRow>
        <Picker $w={204}>
          <InfoIcon />
          <PickerText w={123}>DMI(14,6)</PickerText>
          <Triangle $ml={12} $w={21} $h={18} $c="#999" />
        </Picker>
        <Readout w={121} $ml={9} $c={C.navy}>PDI:48.88</Readout>
        <Readout w={111} $ml={7} $c={C.crimson}>MDI:1.57</Readout>
        <Readout w={129} $ml={6} $c={C.yellow}>ADX:69.97</Readout>
        <Readout w={146} $ml={7} $c={C.blue}>ADXR:54.35</Readout>
      </IndicatorRow>
      <Plot $h={157}>
        <PlotLabel w={61} $x={14} $y={56} $c="#999">35.7</PlotLabel>
        <svg width="1008" height="157" viewBox="0 777 3024 471">
          <Grid rows={[779, 1011, 1246]} />
          <Series data={pdi} color={C.navy} />
          <Series data={mdi} color={C.crimson} />
          <Series data={adx} color={C.yellow} />
          <Series data={adxr} color={C.blue} />
        </svg>
      </Plot>

      <Tools>
        <ToolStrip>
          {tools.map((t) => (
            <Tool key={t.label} $w={t.w}>
              <Fit w={t.fit}>{t.label}</Fit>
            </Tool>
          ))}
        </ToolStrip>
        <Tool $w={86} $size={34}><Fit w={69}>设置</Fit></Tool>
      </Tools>
      <Band />

      <NewsTabs>
        <NewsTab $active><Fit w={80}>动态</Fit></NewsTab>
        <NewsTab><Fit w={172}>资料(F10)</Fit></NewsTab>
        <NewsTab><Fit w={79}>公告</Fit></NewsTab>
        <NewsTab><Fit w={79}>研报</Fit></NewsTab>
      </NewsTabs>

      <IndexRow>
        <IndexName w={160}>上证指数</IndexName>
        <IndexNum w={144} $ml="290px" $weight={700}>4111.76</IndexNum>
        <IndexNum w={112} $ml="29px" $weight={500}>-14.33</IndexNum>
        <IndexNum w={124} $ml="29px" $weight={500}>-0.35%</IndexNum>
        <Triangle $up $ml={13} $w={20} $h={12} $c="#a0a0a0" />
      </IndexRow>

      <Footer>
        <Trade $bg="#eb1919"><Fit w={90}>买入</Fit></Trade>
        <Trade $bg="#1073ec"><Fit w={90}>卖出</Fit></Trade>
        <Action $w={82} $ml={17}>
          <svg width="48" height="46" viewBox="0 0 48 46">
            <path d="M13 43 H7 Q3 43 3 39 V7 Q3 3 7 3 H40 Q44 3 44 7 V13 M26 43 H44 V26 Q44 24.5 42 24.5 H20 M28 17 L20 24.5 L28 32.5" />
          </svg>
          <Fit w={82}>撤/持</Fit>
        </Action>
        <Action $w={70} $ml={40}>
          <svg width="50" height="46" viewBox="0 0 50 46">
            <path d="M3 41 V6 Q3 2.500 6 2.500 H20 Q22 2.500 23 5 L24 7.500 H43 Q46 7.500 46 10.500 V41 Q46 44 43 44 H6 Q3 44 3 41 Z M4 15.500 H45 M15 29 H36 M29 22 L36.500 29 L29 36" />
          </svg>
          <Fit w={70}>分组</Fit>
        </Action>
        <Action $w={70} $ml={46}>
          <svg width="46" height="46" viewBox="0 0 46 46">
            <path d="M18 3 H8 Q2 3 2 9 V37 Q2 42 7 42 H36 Q42 42 42 36 V27 M28 3 H42 V16 M41 4 L19 26" />
          </svg>
          <Fit w={70}>分享</Fit>
        </Action>
        <Action $w={70} $ml={46}>
          <svg width="44" height="46" viewBox="0 0 44 46">
            <path d="M15 7 H42 M15 22 H42 M15 37 H42 M4 7 H6 M4 22 H6 M4 37 H6" />
          </svg>
          <Fit w={70}>更多</Fit>
        </Action>
      </Footer>
    </Page>
  );
}

export default App;
